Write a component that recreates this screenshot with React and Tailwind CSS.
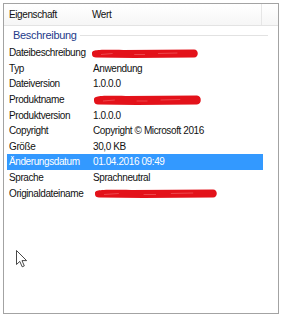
import React from "react";

const rows = [
  { label: "Dateibeschreibung", value: null, redact: { w: 108, h: 9, dy: 4, dx: -2 } },
  { label: "Typ", value: "Anwendung" },
  { label: "Dateiversion", value: "1.0.0.0" },
  { label: "Produktname", value: null, redact: { w: 109, h: 10, dy: 3, dx: 0 } },
  { label: "Produktversion", value: "1.0.0.0" },
  { label: "Copyright", value: "Copyright \u00A9 Microsoft 2016" },
  { label: "Größe", value: "30,0 KB" },
  { label: "Änderungsdatum", value: "01.04.2016 09:49", selected: true },
  { label: "Sprache", value: "Sprachneutral" },
  { label: "Originaldateiname", value: null, redact: { w: 124, h: 9, dy: 4, dx: 1 } },
];

// marker-pen blot over hidden values
function Redaction({ w, h, dx, dy }) {
  return (
    <svg
      width={w}
      height={h}
      viewBox={`0 0 ${w} ${h}`}
      className="absolute"
      style={{ left: dx, top: dy }}
    >
      <path
        d={`M1 ${h / 2} C1 1 4 0.5 ${w * 0.3} 1 L${w - 5} 0.5 C${w} 0.5 ${w} ${h - 0.5} ${w - 5} ${h - 0.5} L${w * 0.4} ${h} L5 ${h - 0.5} C1 ${h - 0.5} 1 ${h / 2 + 1} 1 ${h / 2} Z`}
        fill="#e3121a"
      />
      <path
        d={`M10 ${h / 2 + 1} L${w * 0.2} ${h / 2} M${w * 0.4} ${h / 2 + 1} L${w * 0.5} ${h / 2 + 1} M${w * 0.62} ${h / 2} L${w * 0.8} ${h / 2 - 0.5}`}
        stroke="#f25a5f"
        strokeWidth="0.7"
        fill="none"
      />
    </svg>
  );
}

export default function App() {
  return (
    <div
      className="w-[286px] h-[320px] bg-white pt-[3px] pl-[3px] text-[10px] tracking-[-0.4px] text-[#111]"
      style={{ fontFamily: '"Liberation Sans", Arial, sans-serif' }}
    >
      <div className="relative w-[276px] h-[311px] border border-[#a3a3a3] bg-white">
        {/* column header */}
        <div className="flex h-[22px] items-center border-b border-[#e3e3e3] bg-gradient-to-b from-white to-[#f6f6f6]">
          <div className="w-[88px] pl-[5px]">Eigenschaft</div>
          <div className="flex-1">Wert</div>
          <div className="w-px h-full bg-[#e6e6e6] mr-[16px]"></div>
        </div>

        {/* group header */}
        <div className="flex h-[19px] items-center pl-[9px] pr-[10px]">
          <span className="text-[11px] tracking-[-0.3px] text-[#1e3a8a]">Beschreibung</span>
          <div className="flex-1 h-px bg-[#e2e2e2] ml-[3px]"></div>
        </div>

        {/* property rows */}
        <div className="flex flex-col ml-[3px] w-[256px]">
          {rows.map((r) => (
            <div
              key={r.label}
              className={
                r.selected
                  ? "flex h-[15.6px] items-center bg-[#3399ff] text-white"
                  : "flex h-[15.6px] items-center"
              }
            >
              <div className="w-[86px] pl-[2px] whitespace-nowrap">{r.label}</div>
              <div className="relative flex-1 h-full flex items-center whitespace-nowrap">
                {r.value}
                {r.redact && <Redaction {...r.redact} />}
              </div>
            </div>
          ))}
        </div>

        {/* mouse cursor */}
        <svg
          width="13"
          height="18"
          viewBox="0 0 13 18"
          className="absolute left-[12px] top-[246px]"
        >
          <path
            d="M0.5 0.5 L0.5 14.5 L3.8 11.4 L6.2 16.8 L8.3 15.9 L6 10.6 L10.6 10.6 Z"
            fill="white"
            stroke="#333"
            strokeWidth="0.9"
            strokeLinejoin="round"
          />
        </svg>
      </div>
    </div>
  );
}
